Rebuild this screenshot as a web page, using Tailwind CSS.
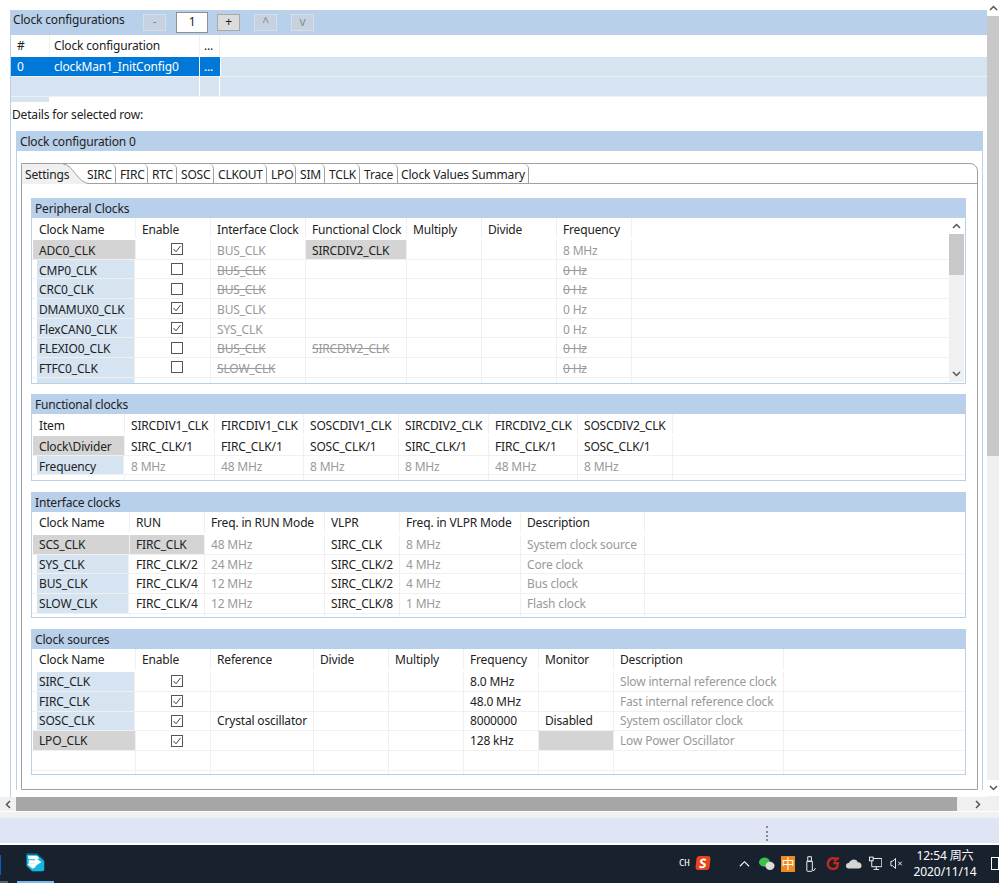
<!DOCTYPE html>
<html lang="en">
<head>
    <meta charset="UTF-8">
    <title>Clock configurations</title>
    <script src="https://cdn.jsdelivr.net/npm/@tailwindcss/browser@4"></script>
</head>
<body class="bg-white text-[#222] text-[12px] leading-none tracking-[-0.17px] font-['Noto_Sans','Noto_Sans_CJK_SC',sans-serif]">
    <svg class="hidden">
        <symbol id="chk" viewBox="0 0 12 12">
            <rect x="0.5" y="0.5" width="11" height="11" fill="#fff" stroke="#555"/>
            <path d="M2.5 6 L5 8.8 L9.5 3" fill="none" stroke="#444" stroke-width="1"/>
        </symbol>
        <symbol id="box" viewBox="0 0 12 12">
            <rect x="0.5" y="0.5" width="11" height="11" fill="#fff" stroke="#555"/>
        </symbol>
    </svg>

    <div class="w-[999px] h-[883px] overflow-hidden flex flex-col">
        <div class="h-[797px] flex overflow-hidden">
            <!-- Page content -->
            <div class="w-[987px] h-[797px] overflow-hidden pt-[10px] pl-[10px]">
                <div class="border-l border-[#b9d0ea] min-h-[800px]">
                    <!-- Clock configurations -->
                    <div class="h-[25px] bg-[#b9d0ea] flex items-center pl-[2px] pb-[6px]">
                        <span class="w-[130px]">Clock configurations</span>
                        <button class="w-[23px] h-[17px] mt-[5px] bg-[#c6d2df] border border-[#d5dfea] text-[#8a8a8a]">-</button>
                        <div class="w-[32px] h-[21px] mt-[5px] ml-[10px] bg-white border border-[#8f8f8f] flex items-center justify-center">1</div>
                        <button class="w-[23px] h-[17px] mt-[5px] ml-[9px] bg-[#dcdcdc] border border-[#a8a8a8]">+</button>
                        <button class="w-[23px] h-[17px] mt-[5px] ml-[14px] bg-[#c6d2df] border border-[#d5dfea] text-[#8a8a8a]">^</button>
                        <button class="w-[23px] h-[17px] mt-[5px] ml-[14px] bg-[#c6d2df] border border-[#d5dfea] text-[#8a8a8a]">v</button>
                    </div>
                    <div class="grid grid-cols-[38px_150px_21px_1fr] h-[22px] items-center">
                        <div class="pl-[6px]">#</div>
                        <div class="pl-[4px] h-full flex items-center border-l border-[#f0f0f0]">Clock configuration</div>
                        <div class="pl-[4px] h-full flex items-center border-x border-[#f0f0f0]">...</div>
                        <div></div>
                    </div>
                    <div class="grid grid-cols-[38px_150px_21px_1fr] h-[20px] text-white border-b border-[#eef2f7]">
                        <div class="bg-[#0078d7] pl-[6px] flex items-center">0</div>
                        <div class="bg-[#0078d7] pl-[5px] flex items-center">clockMan1_InitConfig0</div>
                        <div class="bg-[#0078d7] pl-[4px] flex items-center border-l border-white">...</div>
                        <div class="bg-[#d6e4f2] border-l border-white"></div>
                    </div>
                    <div class="grid grid-cols-[38px_150px_21px_1fr] h-[20px] border-b border-[#eef2f7]">
                        <div class="bg-[#d6e4f2]"></div>
                        <div class="bg-[#d6e4f2]"></div>
                        <div class="bg-[#d6e4f2] border-x border-white"></div>
                        <div class="bg-[#d6e4f2]"></div>
                    </div>
                    <div class="w-[38px] h-[5px] bg-[#d6e4f2]"></div>
                    <div class="h-[29px] pl-[1px] pt-[7px] leading-[12px]">Details for selected row:</div>

                    <!-- Clock configuration 0 -->
                    <div class="ml-[5px] w-[967px] border-x border-[#b9d0ea]">
                        <div class="h-[20px] bg-[#b9d0ea] pl-[3px] pt-[2px] flex items-center">Clock configuration 0</div>
                        <div class="mt-[12px] mx-[4px] border border-[#a0a0a0] rounded-tr-[8px]">
                            <!-- Tabs -->
                            <div class="relative h-[20px] flex whitespace-nowrap border-b border-[#a0a0a0] [&>div]:h-[19px] [&>div]:pl-[4px] [&>div]:pt-[2px] [&>div]:flex [&>div]:items-center [&>div]:border-r [&>div]:border-[#a0a0a0] [&>div]:rounded-tr-[5px]">
                                <svg class="absolute left-0 top-0" width="70" height="20" viewBox="0 0 70 20">
                                    <path d="M0 20 V3 Q0 0 3 0 H41 C52 1 54 18 68 20 Z" fill="#f0f0f0"/>
                                    <path d="M41 0 C52 1 54 18 68 20" fill="none" stroke="#a0a0a0"/>
                                </svg>
                                <div class="relative w-[65px] border-r-0! pl-[3px]!">Settings</div>
                                <div class="w-[29px] pl-0!">SIRC</div>
                                <div class="w-[32px]">FIRC</div>
                                <div class="w-[29px]">RTC</div>
                                <div class="w-[37px]">SOSC</div>
                                <div class="w-[53px]">CLKOUT</div>
                                <div class="w-[29px]">LPO</div>
                                <div class="w-[29px]">SIM</div>
                                <div class="w-[35px]">TCLK</div>
                                <div class="w-[38px]">Trace</div>
                                <div class="w-[131px] pl-[3px]!">Clock Values Summary</div>
                            </div>

                            <div class="pl-[9px] pr-[11px] pt-[14px] pb-[14px]">
                                <!-- Peripheral Clocks -->
                                <div class="h-[186px] border border-[#b9d0ea] overflow-hidden">
                                    <div class="h-[19px] bg-[#b9d0ea] pl-[3px] flex items-center">Peripheral Clocks</div>
                                    <div class="flex">
                                        <div class="w-[917px] [&>div]:grid [&>div]:grid-cols-[104px_75px_95px_101px_75px_75px_75px_1fr] [&>div]:h-[19.7px] [&>div]:border-b [&>div]:border-[#f0f0f0] [&>div>div]:border-r [&>div>div]:border-[#f0f0f0] [&>div>div]:pl-[6px] [&>div>div]:pt-[3px] [&>div>div]:flex [&>div>div]:items-center [&>div>div:last-child]:border-r-0">
                                            <div class="h-[22px]! border-b-0! pb-[2px]">
                                                <div class="pl-[7px]!">Clock Name</div><div>Enable</div><div>Interface Clock</div><div>Functional Clock</div><div>Multiply</div><div>Divide</div><div>Frequency</div><div></div>
                                            </div>
                                            <div>
                                                <div class="bg-[#d4d4d4] ml-[1px]">ADC0_CLK</div>
                                                <div class="pl-[35px]! pt-0!"><svg class="w-[12px] h-[12px]"><use href="#chk"/></svg></div>
                                                <div class="text-[#999]">BUS_CLK</div>
                                                <div class="bg-[#d4d4d4]">SIRCDIV2_CLK</div>
                                                <div></div><div></div>
                                                <div class="text-[#999]">8 MHz</div>
                                                <div></div>
                                            </div>
                                            <div>
                                                <div class="bg-[#d6e4f2] ml-[5px] mr-[1px] pl-[2px]!">CMP0_CLK</div>
                                                <div class="pl-[35px]! pt-0!"><svg class="w-[12px] h-[12px]"><use href="#box"/></svg></div>
                                                <div class="text-[#999] line-through">BUS_CLK</div>
                                                <div></div><div></div><div></div>
                                                <div class="text-[#999] line-through">0 Hz</div>
                                                <div></div>
                                            </div>
                                            <div>
                                                <div class="bg-[#d6e4f2] ml-[5px] mr-[1px] pl-[2px]!">CRC0_CLK</div>
                                                <div class="pl-[35px]! pt-0!"><svg class="w-[12px] h-[12px]"><use href="#box"/></svg></div>
                                                <div class="text-[#999] line-through">BUS_CLK</div>
                                                <div></div><div></div><div></div>
                                                <div class="text-[#999] line-through">0 Hz</div>
                                                <div></div>
                                            </div>
                                            <div>
                                                <div class="bg-[#d6e4f2] ml-[5px] mr-[1px] pl-[2px]!">DMAMUX0_CLK</div>
                                                <div class="pl-[35px]! pt-0!"><svg class="w-[12px] h-[12px]"><use href="#chk"/></svg></div>
                                                <div class="text-[#999]">BUS_CLK</div>
                                                <div></div><div></div><div></div>
                                                <div class="text-[#999]">0 Hz</div>
                                                <div></div>
                                            </div>
                                            <div>
                                                <div class="bg-[#d6e4f2] ml-[5px] mr-[1px] pl-[2px]!">FlexCAN0_CLK</div>
                                                <div class="pl-[35px]! pt-0!"><svg class="w-[12px] h-[12px]"><use href="#chk"/></svg></div>
                                                <div class="text-[#999]">SYS_CLK</div>
                                                <div></div><div></div><div></div>
                                                <div class="text-[#999]">0 Hz</div>
                                                <div></div>
                                            </div>
                                            <div>
                                                <div class="bg-[#d6e4f2] ml-[5px] mr-[1px] pl-[2px]!">FLEXIO0_CLK</div>
                                                <div class="pl-[35px]! pt-0!"><svg class="w-[12px] h-[12px]"><use href="#box"/></svg></div>
                                                <div class="text-[#999] line-through">BUS_CLK</div>
                                                <div class="text-[#999] line-through">SIRCDIV2_CLK</div>
                                                <div></div><div></div>
                                                <div class="text-[#999] line-through">0 Hz</div>
                                                <div></div>
                                            </div>
                                            <div>
                                                <div class="bg-[#d6e4f2] ml-[5px] mr-[1px] pl-[2px]!">FTFC0_CLK</div>
                                                <div class="pl-[35px]! pt-0!"><svg class="w-[12px] h-[12px]"><use href="#box"/></svg></div>
                                                <div class="text-[#999] line-through">SLOW_CLK</div>
                                                <div></div><div></div><div></div>
                                                <div class="text-[#999] line-through">0 Hz</div>
                                                <div></div>
                                            </div>
                                            <div class="h-[5px]! border-b-0!">
                                                <div class="bg-[#d6e4f2] ml-[5px] mr-[1px]"></div><div></div><div></div><div></div><div></div><div></div><div></div><div></div>
                                            </div>
                                        </div>
                                        <!-- Inner scrollbar -->
                                        <div class="w-[15px] h-[164px] bg-[#f0f0f0] flex flex-col">
                                            <div class="h-[16px] bg-white flex items-center justify-center">
                                                <svg width="9" height="6" viewBox="0 0 9 6"><path d="M1 5 L4.5 1.5 L8 5" fill="none" stroke="#555" stroke-width="1.5"/></svg>
                                            </div>
                                            <div class="h-[41px] bg-[#c8c8c8]"></div>
                                            <div class="flex-1"></div>
                                            <div class="h-[16px] flex items-center justify-center">
                                                <svg width="9" height="6" viewBox="0 0 9 6"><path d="M1 1 L4.5 4.5 L8 1" fill="none" stroke="#555" stroke-width="1.5"/></svg>
                                            </div>
                                        </div>
                                    </div>
                                </div>

                                <!-- Functional clocks -->
                                <div class="mt-[10px] h-[87px] border border-[#b9d0ea] overflow-hidden">
                                    <div class="h-[19px] bg-[#b9d0ea] pl-[3px] flex items-center">Functional clocks</div>
                                    <div class="[&>div]:grid [&>div]:grid-cols-[93px_90px_89px_95px_90px_89px_95px_1fr] [&>div]:h-[19.7px] [&>div]:border-b [&>div]:border-[#f0f0f0] [&>div>div]:border-r [&>div>div]:border-[#f0f0f0] [&>div>div]:pl-[6px] [&>div>div]:pt-[3px] [&>div>div]:flex [&>div>div]:items-center [&>div>div:last-child]:border-r-0">
                                        <div class="h-[22px]! border-b-0! pb-[2px]">
                                            <div class="pl-[7px]!">Item</div><div>SIRCDIV1_CLK</div><div>FIRCDIV1_CLK</div><div>SOSCDIV1_CLK</div><div>SIRCDIV2_CLK</div><div>FIRCDIV2_CLK</div><div>SOSCDIV2_CLK</div><div></div>
                                        </div>
                                        <div>
                                            <div class="bg-[#d4d4d4] ml-[1px]">Clock\Divider</div><div>SIRC_CLK/1</div><div>FIRC_CLK/1</div><div>SOSC_CLK/1</div><div>SIRC_CLK/1</div><div>FIRC_CLK/1</div><div>SOSC_CLK/1</div><div></div>
                                        </div>
                                        <div class="text-[#999]">
                                            <div class="bg-[#d6e4f2] text-[#222] ml-[5px] mr-[1px] pl-[2px]!">Frequency</div><div>8 MHz</div><div>48 MHz</div><div>8 MHz</div><div>8 MHz</div><div>48 MHz</div><div>8 MHz</div><div></div>
                                        </div>
                                        <div class="h-[5px]! border-b-0!">
                                            <div></div><div></div><div></div><div></div><div></div><div></div><div></div><div></div>
                                        </div>
                                    </div>
                                </div>

                                <!-- Interface clocks -->
                                <div class="mt-[11px] h-[126px] border border-[#b9d0ea] overflow-hidden">
                                    <div class="h-[19px] bg-[#b9d0ea] pl-[3px] flex items-center">Interface clocks</div>
                                    <div class="[&>div]:grid [&>div]:grid-cols-[98px_75px_120px_75px_121px_124px_1fr] [&>div]:h-[19.7px] [&>div]:border-b [&>div]:border-[#f0f0f0] [&>div>div]:border-r [&>div>div]:border-[#f0f0f0] [&>div>div]:pl-[6px] [&>div>div]:pt-[1px] [&>div>div]:flex [&>div>div]:items-center [&>div>div:last-child]:border-r-0">
                                        <div class="h-[23px]! border-b-0! pb-[2px]">
                                            <div class="pl-[7px]!">Clock Name</div><div>RUN</div><div>Freq. in RUN Mode</div><div>VLPR</div><div>Freq. in VLPR Mode</div><div>Description</div><div></div>
                                        </div>
                                        <div>
                                            <div class="bg-[#d4d4d4] ml-[1px]">SCS_CLK</div><div class="bg-[#d4d4d4]">FIRC_CLK</div><div class="text-[#999]">48 MHz</div><div>SIRC_CLK</div><div class="text-[#999]">8 MHz</div><div class="text-[#999]">System clock source</div><div></div>
                                        </div>
                                        <div>
                                            <div class="bg-[#d6e4f2] ml-[5px] mr-[1px] pl-[2px]!">SYS_CLK</div><div>FIRC_CLK/2</div><div class="text-[#999]">24 MHz</div><div>SIRC_CLK/2</div><div class="text-[#999]">4 MHz</div><div class="text-[#999]">Core clock</div><div></div>
                                        </div>
                                        <div>
                                            <div class="bg-[#d6e4f2] ml-[5px] mr-[1px] pl-[2px]!">BUS_CLK</div><div>FIRC_CLK/4</div><div class="text-[#999]">12 MHz</div><div>SIRC_CLK/2</div><div class="text-[#999]">4 MHz</div><div class="text-[#999]">Bus clock</div><div></div>
                                        </div>
                                        <div>
                                            <div class="bg-[#d6e4f2] ml-[5px] mr-[1px] pl-[2px]!">SLOW_CLK</div><div>FIRC_CLK/4</div><div class="text-[#999]">12 MHz</div><div>SIRC_CLK/8</div><div class="text-[#999]">1 MHz</div><div class="text-[#999]">Flash clock</div><div></div>
                                        </div>
                                        <div class="h-[5px]! border-b-0!">
                                            <div></div><div></div><div></div><div></div><div></div><div></div><div></div>
                                        </div>
                                    </div>
                                </div>

                                <!-- Clock sources -->
                                <div class="mt-[11px] h-[146px] border border-[#b9d0ea] overflow-hidden">
                                    <div class="h-[19px] bg-[#b9d0ea] pl-[3px] flex items-center">Clock sources</div>
                                    <div class="[&>div]:grid [&>div]:grid-cols-[104px_75px_103px_75px_75px_75px_75px_170px_1fr] [&>div]:h-[19.8px] [&>div]:border-b [&>div]:border-[#f0f0f0] [&>div>div]:border-r [&>div>div]:border-[#f0f0f0] [&>div>div]:pl-[6px] [&>div>div]:pt-[1px] [&>div>div]:flex [&>div>div]:items-center [&>div>div:last-child]:border-r-0">
                                        <div class="h-[23px]! border-b-0! pb-[2px]">
                                            <div class="pl-[7px]!">Clock Name</div><div>Enable</div><div>Reference</div><div>Divide</div><div>Multiply</div><div>Frequency</div><div>Monitor</div><div>Description</div><div></div>
                                        </div>
                                        <div>
                                            <div class="bg-[#d6e4f2] ml-[5px] mr-[1px] pl-[2px]!">SIRC_CLK</div>
                                            <div class="pl-[35px]! pt-0!"><svg class="w-[12px] h-[12px]"><use href="#chk"/></svg></div>
                                            <div></div><div></div><div></div><div>8.0 MHz</div><div></div>
                                            <div class="text-[#999]">Slow internal reference clock</div><div></div>
                                        </div>
                                        <div>
                                            <div class="bg-[#d6e4f2] ml-[5px] mr-[1px] pl-[2px]!">FIRC_CLK</div>
                                            <div class="pl-[35px]! pt-0!"><svg class="w-[12px] h-[12px]"><use href="#chk"/></svg></div>
                                            <div></div><div></div><div></div><div>48.0 MHz</div><div></div>
                                            <div class="text-[#999]">Fast internal reference clock</div><div></div>
                                        </div>
                                        <div>
                                            <div class="bg-[#d6e4f2] ml-[5px] mr-[1px] pl-[2px]!">SOSC_CLK</div>
                                            <div class="pl-[35px]! pt-0!"><svg class="w-[12px] h-[12px]"><use href="#chk"/></svg></div>
                                            <div>Crystal oscillator</div><div></div><div></div><div>8000000</div><div>Disabled</div>
                                            <div class="text-[#999]">System oscillator clock</div><div></div>
                                        </div>
                                        <div>
                                            <div class="bg-[#d4d4d4] ml-[1px]">LPO_CLK</div>
                                            <div class="pl-[35px]! pt-0!"><svg class="w-[12px] h-[12px]"><use href="#chk"/></svg></div>
                                            <div></div><div></div><div></div><div>128 kHz</div><div class="bg-[#d4d4d4]"></div>
                                            <div class="text-[#999]">Low Power Oscillator</div><div></div>
                                        </div>
                                        <div>
                                            <div></div><div></div><div></div><div></div><div></div><div></div><div></div><div></div><div></div>
                                        </div>
                                        <div class="h-[5px]! border-b-0!">
                                            <div></div><div></div><div></div><div></div><div></div><div></div><div></div><div></div><div></div>
                                        </div>
                                    </div>
                                </div>
                            </div>
                        </div>
                    </div>
                </div>
            </div>

            <!-- Page scrollbar -->
            <div class="w-[12px] h-[797px] bg-[#f0f0f0] flex flex-col">
                <div class="h-[16px] bg-white flex items-center justify-center">
                    <svg width="9" height="6" viewBox="0 0 9 6"><path d="M1 5 L4.5 1.5 L8 5" fill="none" stroke="#555" stroke-width="1.5"/></svg>
                </div>
                <div class="h-[440px] bg-[#c8c8c8]"></div>
                <div class="flex-1"></div>
                <div class="h-[16px] bg-white flex items-center justify-center mb-[1px]">
                    <svg width="9" height="6" viewBox="0 0 9 6"><path d="M1 1 L4.5 4.5 L8 1" fill="none" stroke="#555" stroke-width="1.5"/></svg>
                </div>
            </div>
        </div>

        <!-- Horizontal scrollbar -->
        <div class="h-[14px] flex bg-[#f0f0f0]">
            <div class="w-[16px] flex items-center justify-center">
                <svg width="6" height="9" viewBox="0 0 6 9"><path d="M5 1 L1.5 4.5 L5 8" fill="none" stroke="#555" stroke-width="1.5"/></svg>
            </div>
            <div class="w-[941px] bg-[#a6a6a6]"></div>
            <div class="w-[42px] pl-[18px] flex items-center">
                <svg width="6" height="9" viewBox="0 0 6 9"><path d="M1 1 L4.5 4.5 L1 8" fill="none" stroke="#555" stroke-width="1.5"/></svg>
            </div>
        </div>
        <div class="h-[7px] bg-[#f1f1f1] border-t border-white"></div>

        <!-- Status strip -->
        <div class="h-[25px] bg-[#dfe5f5] flex justify-start">
            <div class="ml-[766px] mt-[8px] h-[15px] border-l-2 border-dotted border-[#8a8a8a]"></div>
        </div>
        <div class="h-[2px] bg-white"></div>

        <!-- Windows taskbar -->
        <div class="relative flex-1 bg-[#18222e] flex items-center text-white">
            <div class="absolute left-0 top-[10px] w-[1px] h-[20px] bg-[#0a5dc2]"></div>
            <div class="absolute left-0 bottom-0 w-[8px] h-[2px] bg-[#55606c]"></div>
            <div class="absolute left-[17px] bottom-0 w-[37px] h-[2px] bg-[#76b9ed]"></div>
            <svg class="ml-[25px] mb-[3px]" width="22" height="21" viewBox="0 0 22 21">
                <path d="M1 0 H13 L21 7 V20 H7 L1 14 Z" fill="#0d4f78"/>
                <path d="M2 2 H13 L21 9 V18 Q21 20 19 20 H8 L2 14 Z" fill="#12b8e0"/>
                <path d="M3 3 H13 L15 5 V7 H4 Z M3 12 H12 V15 L9 17 H8 L3 13 Z" fill="#fff"/>
                <path d="M4 8 H11 V5.500 L18 10 L11 14.500 V12 H4 Z" fill="#fff"/>
            </svg>

            <!-- Tray -->
            <span class="ml-[634px] mb-[2px] text-[9px] font-['DejaVu_Sans_Mono',monospace] w-[19px]">CH</span>
            <span class="w-[15px] h-[14px] mb-[3px] rounded-[3px] -skew-x-6 bg-[#e8451c] text-white text-[13px] font-bold flex items-center justify-center">S</span>
            <svg class="ml-[29px] mb-[1px]" width="12" height="7" viewBox="0 0 12 7"><path d="M1 6.500 L6 1.500 L11 6.500" fill="none" stroke="#fff" stroke-width="1.200"/></svg>
            <svg class="ml-[9px] mb-[1px]" width="17" height="15" viewBox="0 0 17 15">
                <ellipse cx="6" cy="6" rx="6" ry="5" fill="#3fbf4a"/>
                <ellipse cx="12" cy="10" rx="5" ry="4.500" fill="#dcdcdc"/>
            </svg>
            <span class="ml-[6px] mb-[1px] w-[16px] h-[16px] bg-[#f08a1d] text-white text-[13px] flex items-center justify-center">中</span>
            <svg class="ml-[10px] mb-[1px]" width="12" height="18" viewBox="0 0 12 18">
                <path d="M2 6 H8 V16 Q8 17 7 17 H3 Q2 17 2 16 Z M3 1 H7 V6 H3 Z" fill="none" stroke="#fff"/>
                <path d="M8 15 L9.500 16.500 L11.500 13.500" fill="none" stroke="#fff"/>
            </svg>
            <svg class="ml-[10px] mb-[1px]" width="15" height="15" viewBox="0 0 15 15">
                <path d="M12 3 C8 0 2 2 2 8 C2 13 8 15 12 12 L13 7 H8 M14 1 L9 5" fill="none" stroke="#c9261c" stroke-width="2.500"/>
            </svg>
            <svg class="ml-[6px] mb-[1px]" width="17" height="11" viewBox="0 0 17 11">
                <path d="M3 11 Q0 11 0 8 Q0 5 3 5 Q5 1 9 1 Q12 1 13 4 Q17 4 17 8 Q17 11 14 11 Z" fill="#d5d5d5"/>
            </svg>
            <svg class="ml-[7px] mb-[1px]" width="15" height="15" viewBox="0 0 15 15">
                <path d="M3 2 H14 V11 H3 Z M8 11 V14 M5 14 H11" fill="none" stroke="#fff"/>
                <rect x="0.500" y="0.500" width="4" height="4" fill="#18222e" stroke="#fff"/>
            </svg>
            <svg class="ml-[8px] mb-[1px]" width="14" height="13" viewBox="0 0 14 13">
                <path d="M1 4 H3 L6 1 V12 L3 9 H1 Z" fill="none" stroke="#fff"/>
                <path d="M9 4.500 L13 8.500 M13 4.500 L9 8.500" fill="none" stroke="#fff"/>
            </svg>
            <div class="ml-[10px] w-[64px] shrink-0 mb-[1px] flex flex-col items-center gap-[4px] tracking-[-0.1px] text-[12px]">
                <span>12:54 周六</span>
                <span>2020/11/14</span>
            </div>
            <div class="ml-[14px] mb-[1px] w-[8px] h-[13px] shrink-0 border border-white"></div>
        </div>
    </div>
</body>
</html>
